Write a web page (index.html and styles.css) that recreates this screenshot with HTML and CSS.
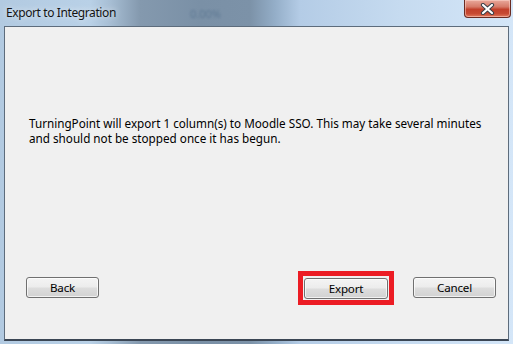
FILE: index.html
```html
<!DOCTYPE html>
<html>
<head>
<meta charset="utf-8">
<link rel="stylesheet" href="styles.css">
</head>
<body>
<div class="frame">
  <div class="titlebar">
    <span class="title">Export to Integration</span>
    <span class="ghost">0.00%</span>
    <div class="close">
      <svg width="19" height="12" viewBox="0 0 19 12">
        <path d="M5 2 L14 10 M14 2 L5 10" stroke="#3a3f48" stroke-width="4.2" stroke-linecap="round" fill="none"/>
        <path d="M5 2 L14 10 M14 2 L5 10" stroke="#ffffff" stroke-width="2.2" stroke-linecap="round" fill="none"/>
      </svg>
    </div>
  </div>
  <div class="client">
    <p class="message">TurningPoint will export 1 column(s) to Moodle SSO. This may take several minutes<br>and should not be stopped once it has begun.</p>
    <div class="actions">
      <button class="btn btn-back">Back</button>
      <div class="spacer"></div>
      <div class="highlight"><button class="btn btn-export">Export</button></div>
      <button class="btn btn-cancel">Cancel</button>
    </div>
  </div>
</div>
</body>
</html>
```

FILE: styles.css
```css
html, body {
  margin: 0;
  padding: 0;
}
body {
  width: 513px;
  height: 344px;
  overflow: hidden;
  font-family: "Noto Sans", "DejaVu Sans", sans-serif;
}
.frame {
  width: 513px;
  height: 344px;
  box-sizing: border-box;
  padding: 0 4px 3px 4px;
  display: flex;
  flex-direction: column;
  background: linear-gradient(to right, #b2cae1 0px, #b9d1e7 90px, #a7bed4 110px, #8499ae 140px, #7a90a6 200px, #7c92a8 250px, #94aec8 275px, #b4cce6 300px, #c6dbf0 400px, #d4e6f8 513px);
}
.titlebar {
  height: 26px;
  flex: none;
  display: flex;
  align-items: flex-start;
  position: relative;
}
.title {
  margin-left: 2px;
  margin-top: 5px;
  font-size: 12px;
  line-height: 16px;
  color: #141414;
  text-shadow: 0 0 6px rgba(255,255,255,0.8);
  letter-spacing: -0.4px;
}
.ghost {
  position: absolute;
  left: 186px;
  top: 6px;
  font-size: 11px;
  color: #5f7a94;
  filter: blur(1.2px);
}
.close {
  position: absolute;
  right: -2px;
  top: 0;
  width: 45px;
  height: 17px;
  border: 1px solid #6a2b22;
  border-top: none;
  border-radius: 0 0 4px 4px;
  background: linear-gradient(to bottom, #e9a99c 0%, #d67a68 40%, #c2402b 55%, #c74a33 80%, #e27a5e 100%);
  box-shadow: inset 0 0 0 1px rgba(255,220,210,0.5);
  display: flex;
  align-items: center;
  justify-content: center;
}
.client {
  flex: 1;
  background: #f0f0f0;
  border: 1px solid #5d6c7c;
  border-bottom: 2px solid #3b4654;
  display: flex;
  flex-direction: column;
}
.message {
  margin: 89px 0 0 24px;
  font-size: 11.7px;
  line-height: 15px;
  color: #000;
  white-space: nowrap;
  letter-spacing: 0;
}
.actions {
  margin-top: auto;
  margin-bottom: 34px;
  display: flex;
  align-items: center;
  padding: 0 12px 0 21px;
}
.spacer {
  flex: 1;
}
.btn {
  height: 21px;
  box-sizing: border-box;
  border: 1px solid #707070;
  border-radius: 3px;
  background: linear-gradient(to bottom, #f4f4f4 0%, #ececec 48%, #dddddd 52%, #d2d2d2 100%);
  box-shadow: inset 0 0 0 1px rgba(255,255,255,0.7);
  font-family: "Noto Sans", "DejaVu Sans", sans-serif;
  font-size: 11.6px;
  line-height: 17px;
  color: #000;
  padding: 0;
  letter-spacing: -0.2px;
}
.btn-back {
  width: 73px;
}
.btn-export {
  width: 84px;
  display: block;
}
.btn-cancel {
  width: 83px;
  margin-left: 19px;
}
.highlight {
  border: 5px solid #ec1c24;
  padding: 2px 1px 1px 1px;
  margin-top: 1px;
}
```
